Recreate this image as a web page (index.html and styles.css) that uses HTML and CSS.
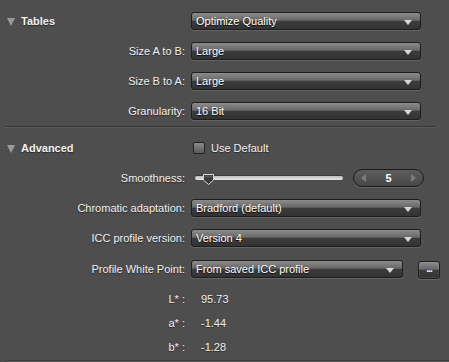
FILE: index.html
```html
<!DOCTYPE html>
<html lang="en">
<head>
    <meta charset="UTF-8">
    <title>Profile Settings</title>
    <link rel="stylesheet" href="styles.css">
</head>
<body>
    <div class="panel">
        <!-- Tables -->
        <div class="group tables">
            <div class="row">
                <div class="heading"><span class="disclosure"></span>Tables</div>
                <div class="popup"><span>Optimize Quality</span><i class="arrow"></i></div>
            </div>
            <div class="row">
                <label>Size A to B:</label>
                <div class="popup"><span>Large</span><i class="arrow"></i></div>
            </div>
            <div class="row">
                <label>Size B to A:</label>
                <div class="popup"><span>Large</span><i class="arrow"></i></div>
            </div>
            <div class="row">
                <label>Granularity:</label>
                <div class="popup"><span>16 Bit</span><i class="arrow"></i></div>
            </div>
        </div>

        <div class="separator"></div>

        <!-- Advanced -->
        <div class="group advanced">
            <div class="row">
                <div class="heading"><span class="disclosure"></span>Advanced</div>
                <div class="check"><span class="box"></span>Use Default</div>
            </div>
            <div class="row">
                <label>Smoothness:</label>
                <div class="slider-line">
                    <div class="slider">
                        <div class="track"></div>
                        <svg class="thumb" width="13" height="13" viewBox="0 0 13 13">
                            <path d="M1.5 1.5 H11.5 V7 L6.5 11.5 L1.5 7 Z" fill="#3a3a3a" stroke="#d8d8d8" stroke-width="1"/>
                            <path d="M2.5 2.5 H10.5 V4.5 H2.5 Z" fill="#555"/>
                        </svg>
                    </div>
                    <div class="stepper">
                        <i class="step left"></i>
                        <span>5</span>
                        <i class="step right"></i>
                    </div>
                </div>
            </div>
            <div class="row">
                <label>Chromatic adaptation:</label>
                <div class="popup"><span>Bradford (default)</span><i class="arrow"></i></div>
            </div>
            <div class="row">
                <label>ICC profile version:</label>
                <div class="popup"><span>Version 4</span><i class="arrow"></i></div>
            </div>
            <div class="row">
                <label>Profile White Point:</label>
                <div class="popup-line">
                    <div class="popup short"><span>From saved ICC profile</span><i class="arrow"></i></div>
                    <div class="more">...</div>
                </div>
            </div>
        </div>

        <div class="group values">
            <div class="row value">
                <label>L* :</label>
                <span>95.73</span>
            </div>
            <div class="row value">
                <label>a* :</label>
                <span>-1.44</span>
            </div>
            <div class="row value">
                <label>b* :</label>
                <span>-1.28</span>
            </div>
        </div>
        <div class="bottom-line"></div>
    </div>
</body>
</html>
```

FILE: styles.css
```css
* {
    margin: 0;
    padding: 0;
    box-sizing: border-box;
}

body {
    font-family: "Liberation Sans", Arial, sans-serif;
    font-size: 11px;
    background: #4e4e4e;
    color: #f2f2f2;
    width: 449px;
    height: 362px;
    overflow: hidden;
}

.panel {
    padding-top: 12px;
}

.group {
    display: flex;
    flex-direction: column;
    gap: 12px;
}

.row {
    display: grid;
    grid-template-columns: 185px 1fr;
    column-gap: 6px;
    height: 18px;
    align-items: center;
}

.row label {
    text-align: right;
    text-shadow: 0 1px 1px rgba(0, 0, 0, 0.5);
}

.heading {
    display: flex;
    align-items: center;
    font-weight: bold;
    padding-left: 7px;
    text-shadow: 0 1px 1px rgba(0, 0, 0, 0.5);
}

.disclosure {
    width: 0;
    height: 0;
    border-left: 4.5px solid transparent;
    border-right: 4.5px solid transparent;
    border-top: 8px solid #9a9a9a;
    margin-right: 6px;
    margin-top: 1px;
}

/* popup buttons */
.popup {
    position: relative;
    width: 230px;
    height: 18px;
    border: 1px solid #1e1e1e;
    border-radius: 3px;
    background: linear-gradient(to bottom, #8c8c8c 0%, #686868 45%, #3c3c3c 52%, #333 100%);
    box-shadow: 0 1px 0 rgba(255, 255, 255, 0.12);
    display: flex;
    align-items: center;
    padding-left: 4px;
    color: #fff;
    text-shadow: 0 1px 1px rgba(0, 0, 0, 0.8);
}

.popup.short {
    width: 212px;
}

.arrow {
    position: absolute;
    right: 8px;
    top: 7px;
    width: 0;
    height: 0;
    border-left: 4px solid transparent;
    border-right: 4px solid transparent;
    border-top: 5px solid #d8d8d8;
}

.popup-line {
    display: flex;
    align-items: center;
    gap: 15px;
}

.more {
    width: 22px;
    height: 18px;
    margin-top: 2px;
    border: 1px solid #1e1e1e;
    border-radius: 3px;
    background: linear-gradient(to bottom, #8c8c8c 0%, #686868 45%, #3c3c3c 52%, #333 100%);
    box-shadow: 0 1px 0 rgba(255, 255, 255, 0.15), inset 0 0 0 1px rgba(255, 255, 255, 0.08);
    color: #fff;
    font-size: 10px;
    font-weight: bold;
    line-height: 14px;
    text-align: center;
    letter-spacing: -1px;
}

.separator {
    margin: 6px 14px 0 6px;
    border-top: 1px solid #363636;
    border-bottom: 1px solid #5a5a5a;
}

.advanced {
    margin-top: 11px;
}

/* checkbox */
.check {
    display: flex;
    align-items: center;
    gap: 6px;
    padding-left: 2px;
    text-shadow: 0 1px 1px rgba(0, 0, 0, 0.5);
}

.box {
    width: 12px;
    height: 12px;
    border: 1px solid #222;
    border-radius: 2px;
    background: linear-gradient(to bottom, #8a8a8a, #5a5a5a);
}

/* slider */
.slider-line {
    display: flex;
    align-items: center;
    gap: 10px;
    padding-left: 4px;
}

.slider {
    position: relative;
    width: 148px;
    height: 13px;
    display: flex;
    align-items: center;
}

.track {
    width: 100%;
    height: 4px;
    border-radius: 2px;
    background: linear-gradient(to bottom, #bdbdbd, #e6e6e6);
    box-shadow: 0 -1px 0 #3a3a3a;
}

.thumb {
    position: absolute;
    left: 7px;
    top: 1px;
}

.stepper {
    width: 71px;
    height: 18px;
    border: 1px solid #1a1a1a;
    border-radius: 9px;
    background: linear-gradient(to bottom, #5e5e5e, #474747);
    box-shadow: 0 1px 0 rgba(255, 255, 255, 0.15);
    display: flex;
    align-items: center;
    padding: 0 7px;
    font-weight: bold;
    color: #fff;
}

.stepper span {
    flex: 1;
    text-align: center;
}

.step {
    width: 0;
    height: 0;
    border-top: 4px solid transparent;
    border-bottom: 4px solid transparent;
}

.step.left {
    border-right: 5px solid #7a7a7a;
}

.step.right {
    border-left: 5px solid #7a7a7a;
}

/* L*a*b* values */
.values {
    margin-top: 15px;
    gap: 10px;
}

.row.value {
    height: 14px;
    column-gap: 16px;
}

.value span {
    text-shadow: 0 1px 1px rgba(0, 0, 0, 0.5);
}

.bottom-line {
    margin: 6px 0 0 7px;
    border-top: 1px solid #3a3a3a;
    border-bottom: 1px solid #5a5a5a;
}
```
